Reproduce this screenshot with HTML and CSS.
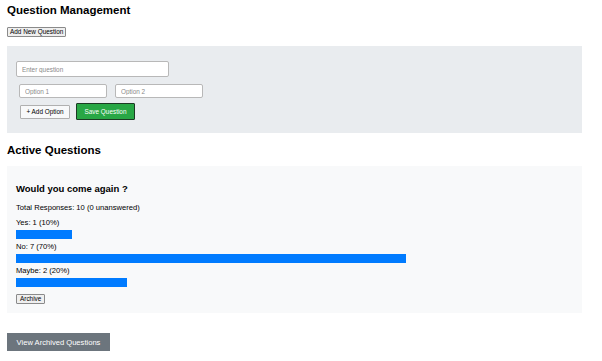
FILE: index.html
```html
<!DOCTYPE html>
<html lang="en">
<head>
    <meta charset="UTF-8">
    <meta name="viewport" content="width=device-width, initial-scale=1.0">
    <title>Question Management</title>
    <link rel="stylesheet" href="styles.css">
</head>
<body>
    <h2 class="page-title">Question Management</h2>
    <div class="btn-row">
        <button class="plain-btn add-question-btn">Add New Question</button>
    </div>

    <div class="question-form">
        <input class="question-input" type="text" placeholder="Enter question">
        <div class="option-row">
            <input class="option-input" type="text" placeholder="Option 1">
            <input class="option-input" type="text" placeholder="Option 2">
        </div>
        <div class="form-actions">
            <button class="add-option-btn">+ Add Option</button>
            <button class="save-btn">Save Question</button>
        </div>
    </div>

    <h2 class="section-title">Active Questions</h2>
    <div class="question-card">
        <h3 class="question-text">Would you come again ?</h3>
        <p class="total">Total Responses: 10 (0 unanswered)</p>
        <div class="results">
            <div class="option-label">Yes: 1 (10%)</div>
            <div class="bar" style="width: 10%"></div>
            <div class="option-label">No: 7 (70%)</div>
            <div class="bar" style="width: 70%"></div>
            <div class="option-label">Maybe: 2 (20%)</div>
            <div class="bar" style="width: 20%"></div>
        </div>
        <div class="btn-row">
            <button class="plain-btn archive-btn">Archive</button>
        </div>
    </div>

    <div class="btn-row">
        <button class="archived-btn">View Archived Questions</button>
    </div>
</body>
</html>
```

FILE: styles.css
```css
body {
    font-family: 'Liberation Sans', Arial, sans-serif;
    font-size: 7.6px;
    line-height: 9px;
    margin: 0;
    padding: 3px 20px 0 7px;
    color: #000;
    background-color: #fff;
}

.page-title,
.section-title {
    font-size: 11.5px;
    line-height: 14px;
    margin: 0;
}

.btn-row {
    display: flex;
}

.plain-btn {
    font-family: inherit;
    font-size: 6.4px;
    line-height: 8px;
    padding: 0 2px;
    background-color: #efefef;
    border: 1px solid #8a8a8a;
    border-radius: 1px;
    color: #000;
}

.add-question-btn {
    margin-top: 10px;
}

/* Form box */
.question-form {
    background-color: #e9ecef;
    margin-top: 9px;
    padding: 15px 9px 13px 9px;
}

input {
    display: block;
    font-family: inherit;
    font-size: 6.4px;
    border: 1px solid #b8b8b8;
    border-radius: 2px;
    background-color: #fff;
    box-sizing: border-box;
    padding: 0 5px;
    margin: 0;
}

input::placeholder {
    color: #8a8a8a;
}

.question-input {
    width: 153px;
    height: 16px;
}

.option-row {
    display: flex;
    gap: 8px;
    margin-top: 7px;
    padding-left: 3px;
}

.option-input {
    width: 88px;
    height: 14px;
}

.form-actions {
    display: flex;
    align-items: center;
    gap: 6px;
    margin-top: 5px;
    padding-left: 4px;
}

.add-option-btn {
    font-family: inherit;
    font-size: 6.4px;
    height: 14px;
    width: 50px;
    padding: 0;
    background-color: #f8f9fa;
    border: 1px solid #b0b0b0;
    border-radius: 1px;
    color: #000;
}

.save-btn {
    font-family: inherit;
    font-size: 6.4px;
    height: 17px;
    width: 59px;
    padding: 0;
    background-color: #28a745;
    border: 1px solid #1c3a24;
    border-radius: 1px;
    color: #fff;
}

.section-title {
    margin-top: 10px;
}

/* Active question card */
.question-card {
    background-color: #f8f9fa;
    margin-top: 9px;
    padding: 17px 9px 9px 9px;
}

.question-text {
    font-size: 9.5px;
    line-height: 11px;
    margin: 0;
}

.total {
    margin: 9px 0 0 0;
}

.results {
    margin-top: 6px;
}

.option-label {
    margin-bottom: 3px;
}

.bar {
    height: 9px;
    background-color: #007bff;
    margin-bottom: 3px;
}

.archive-btn {
    margin-top: 4px;
    padding: 0 3px;
}

.archived-btn {
    font-family: inherit;
    font-size: 7.6px;
    margin-top: 20px;
    width: 103px;
    height: 18px;
    padding: 0;
    border: none;
    background-color: #6c757d;
    color: #fff;
}
```
